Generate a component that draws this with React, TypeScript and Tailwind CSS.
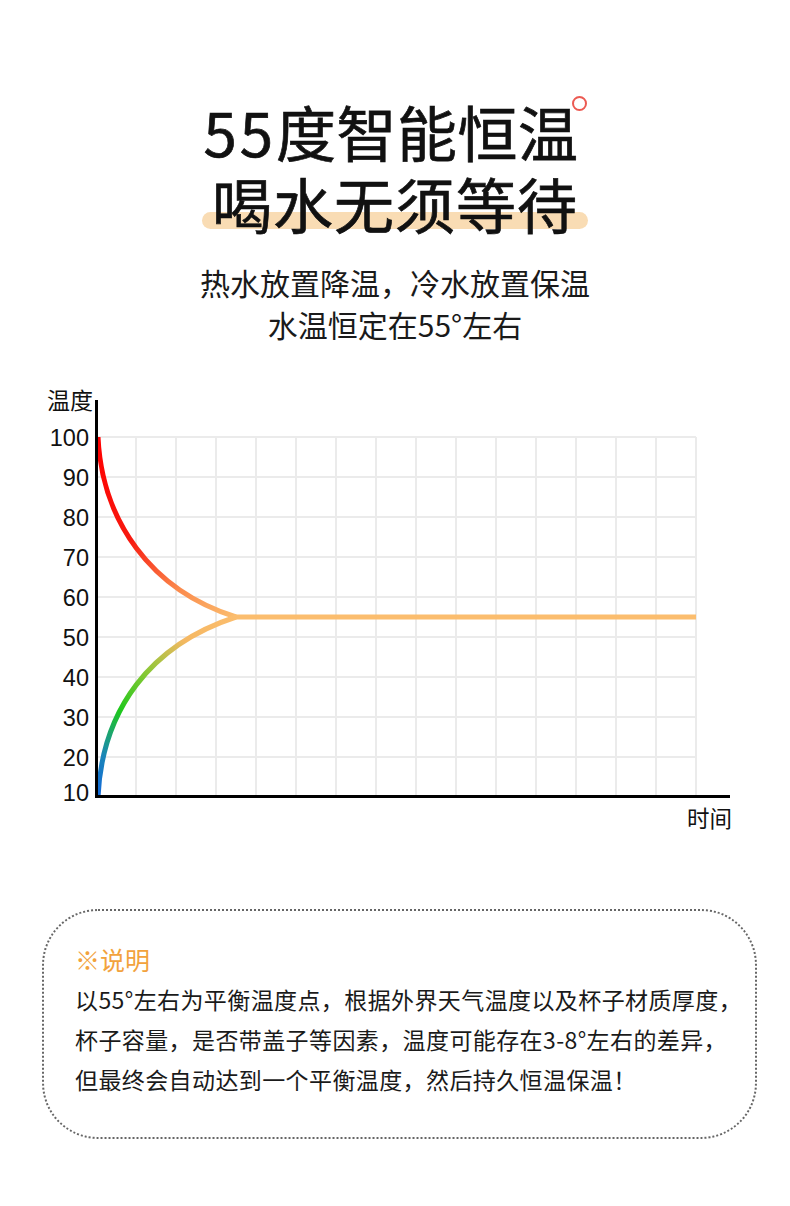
const cjk = '[font-family:"Noto_Sans_CJK_SC","Noto_Sans",sans-serif]';

const yLabels = [100, 90, 80, 70, 60, 50, 40, 30, 20, 10];

const TempChart = () => {
  // chart coordinates: x is page x, y is page y - 380
  const hLines = Array.from({ length: 9 }, (_, i) => 57 + i * 40);
  const vLines = Array.from({ length: 15 }, (_, i) => 136 + i * 40);

  return (
    <svg width="790" height="460" viewBox="0 0 790 460" className="block">
      <defs>
        <linearGradient id="hot" gradientUnits="userSpaceOnUse" x1="98" y1="57" x2="236" y2="237">
          <stop offset="0" stopColor="#ff0000" />
          <stop offset="0.45" stopColor="#f71a10" />
          <stop offset="0.75" stopColor="#fb8a4c" />
          <stop offset="1" stopColor="#fbbd6e" />
        </linearGradient>
        <linearGradient id="cold" gradientUnits="userSpaceOnUse" x1="98" y1="417" x2="236" y2="237">
          <stop offset="0" stopColor="#1268dc" />
          <stop offset="0.16" stopColor="#1a86b8" />
          <stop offset="0.36" stopColor="#1ec81c" />
          <stop offset="0.56" stopColor="#86c834" />
          <stop offset="0.78" stopColor="#f5b862" />
          <stop offset="1" stopColor="#fbbd6e" />
        </linearGradient>
      </defs>

      {/* grid */}
      {hLines.map((y) => (
        <line key={'h' + y} x1="96" y1={y} x2="696" y2={y} stroke="#ebebeb" strokeWidth="2" />
      ))}
      {vLines.map((x) => (
        <line key={'v' + x} x1={x} y1="57" x2={x} y2="417" stroke="#ebebeb" strokeWidth="2" />
      ))}

      {/* curves */}
      <path d="M98,57 C102,140 150,210 236,237" fill="none" stroke="url(#hot)" strokeWidth="5" />
      <path d="M98,417 C102,330 150,265 236,237" fill="none" stroke="url(#cold)" strokeWidth="5" />
      <line x1="234" y1="237" x2="696" y2="237" stroke="#fbbd6e" strokeWidth="5" />

      {/* axes */}
      <line x1="96.5" y1="20" x2="96.5" y2="418" stroke="#000" strokeWidth="3" />
      <line x1="95" y1="416.5" x2="730" y2="416.5" stroke="#000" strokeWidth="3" />

      {/* labels */}
      <text x="93" y="29" textAnchor="end" fontSize="23" fill="#111" className={cjk}>
        温度
      </text>
      {yLabels.map((v, i) => (
        <text
          key={v}
          x="89"
          y={(v === 10 ? 412 : 57 + i * 40) + 8.5}
          textAnchor="end"
          fontSize="23.5"
          fill="#111"
          className='[font-family:"Liberation_Sans",sans-serif]'
        >
          {v}
        </text>
      ))}
      <text x="732" y="447" textAnchor="end" fontSize="22.5" fill="#111" className={cjk}>
        时间
      </text>
    </svg>
  );
};

const App = () => {
  return (
    <div className={`w-[790px] min-h-[1206px] bg-white text-[#111] ${cjk}`}>
      {/* heading */}
      <div className="pt-[95px] flex flex-col items-center [-webkit-text-stroke:0.7px_#111]">
        <div className="flex items-start text-[60px] leading-[72px] font-normal">
          <span className="tracking-[0.5px]">
            <span className="tracking-[3px]">55</span>度智能恒温
          </span>
          <span className="mt-[1px] -ml-[7px] w-[15px] h-[15px] rounded-full border-[2.5px] border-[#ec5a52]" />
        </div>
        <div className="relative text-[60px] leading-[72px] font-normal tracking-[1px]">
          <span className="absolute left-[-10px] right-[-10px] top-[45px] h-[17px] rounded-full bg-[#f9dcb4]" />
          <span className="relative">喝水无须等待</span>
        </div>
      </div>

      {/* subtitle */}
      <div className="mt-[22px] flex flex-col items-center text-[30px] leading-[42px] text-[#1a1a1a]">
        <div>热水放置降温，冷水放置保温</div>
        <div>水温恒定在55°左右</div>
      </div>

      {/* chart */}
      <div className="mt-[35px]">
        <TempChart />
      </div>

      {/* note */}
      <div className="mt-[69px] ml-[42px] w-[715px] rounded-[56px] border-2 border-dotted border-[#666] pl-[31px] pr-[10px] pt-[28px] pb-[38px]">
        <div className="text-[25px] leading-[40px] text-[#f2a23c]">※说明</div>
        <div className="text-[23px] leading-[40px] tracking-[0.4px] text-[#1a1a1a]">
          <p>以55°左右为平衡温度点，根据外界天气温度以及杯子材质厚度，</p>
          <p>杯子容量，是否带盖子等因素，温度可能存在3-8°左右的差异，</p>
          <p>但最终会自动达到一个平衡温度，然后持久恒温保温！</p>
        </div>
      </div>
    </div>
  );
};

export default App;
